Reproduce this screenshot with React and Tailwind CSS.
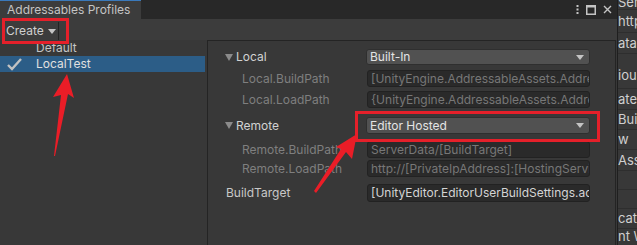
import { useState } from "react";

const rows = [
  { kind: "dropdown", label: "Local", value: "Built-In", mt: "mt-[8px]", h: "h-[16px]" },
  { kind: "field", label: "Local.BuildPath", value: "[UnityEngine.AddressableAssets.Addressables.BuildPath]/[BuildTarget]", mt: "mt-[5px]", h: "h-[17px]" },
  { kind: "field", label: "Local.LoadPath", value: "{UnityEngine.AddressableAssets.Addressables.RuntimePath}/[BuildTarget]", mt: "mt-[4px]", h: "h-[17px]" },
  { kind: "dropdown", label: "Remote", value: "Editor Hosted", mt: "mt-[9px]", h: "h-[17px]" },
  { kind: "field", label: "Remote.BuildPath", value: "ServerData/[BuildTarget]", mt: "mt-[7px]", h: "h-[17px]" },
  { kind: "field", label: "Remote.LoadPath", value: "http://[PrivateIpAddress]:[HostingServicePort]", mt: "mt-[2px]", h: "h-[17px]" },
  { kind: "edit", label: "BuildTarget", value: "[UnityEditor.EditorUserBuildSettings.activeBuildTarget]", mt: "mt-[7px]", h: "h-[18px]" },
];

const sideRows = [
  { text: "Ser", h: "h-[14px]", align: "items-start -mt-[4px]" },
  { text: "http", h: "h-[23px]", align: "items-center" },
  { text: "atalo", h: "h-[21px]", align: "items-center" },
  { text: "ious", h: "h-[35px]", align: "items-end pb-[6px]" },
  { text: "ate", h: "h-[21px]", align: "items-center" },
  { text: "Bui", h: "h-[20px]", align: "items-center" },
  { text: "w", h: "h-[20px]", align: "items-center" },
  { text: "Ass", h: "h-[21px]", align: "items-center" },
  { text: "", h: "h-[19px]", align: "items-center" },
  { text: "", h: "h-[19px]", align: "items-center" },
  { text: "cate", h: "h-[20px]", align: "items-center" },
  { text: "nt W", h: "h-[20px]", align: "items-start pt-[1px]" },
];

function Caret({ className }) {
  return (
    <svg width="8" height="5" viewBox="0 0 8 5" className={className}>
      <path d="M0 0 H8 L4 5 Z" fill="currentColor" />
    </svg>
  );
}

function Foldout() {
  return (
    <svg width="8" height="7" viewBox="0 0 8 7" className="text-[#8b8b8b] mr-[3px]">
      <path d="M0 0 H8 L4 7 Z" fill="currentColor" />
    </svg>
  );
}

function Row({ row }) {
  const sub = row.kind === "field";
  return (
    <div className={`flex items-center ${row.mt}`}>
      <div className={`w-[158px] flex items-center ${sub ? "pl-[34px] text-[#7f7f7f]" : row.kind === "edit" ? "pl-[18px] text-[#c8c8c8]" : "pl-[17px] text-[#d2d2d2]"}`}>
        {row.kind === "dropdown" && <Foldout />}
        <span className="whitespace-nowrap">{row.label}</span>
      </div>
      {row.kind === "dropdown" ? (
        <div className={`w-[224px] ${row.h} rounded-[3px] bg-[#515151] border border-[#2f2f2f] flex items-center justify-between pl-[3px] pr-[5px] text-[#e4e4e4]`}>
          <span className="whitespace-nowrap">{row.value}</span>
          <Caret className="text-[#c4c4c4]" />
        </div>
      ) : (
        <div className={`ml-[1px] w-[223px] ${row.h} rounded-[3px] bg-[#2a2a2a] border border-[#222222] flex items-center pl-[3px] overflow-hidden ${row.kind === "edit" ? "text-[#d4d4d4]" : "text-[#777777]"}`}>
          <span className="whitespace-nowrap">{row.value}</span>
        </div>
      )}
    </div>
  );
}

export default function App() {
  const [selected] = useState("LocalTest");

  return (
    <div className="relative w-[637px] h-[245px] overflow-hidden flex bg-[#383838] font-['Inter',sans-serif] text-[12px] leading-none">
      <div className="w-[617px] flex flex-col shrink-0">
        <div className="h-[19px] bg-[#282828] flex items-stretch">
          <div className="w-[141px] bg-[#3c3c3c] border-t border-[#3a79bb] flex items-center pl-[7px] text-[#c4c4c4]">
            Addressables Profiles
          </div>
          <div className="flex-1 flex items-center justify-end pr-[5px] gap-[7px] text-[#c4c4c4]">
            <svg width="3" height="9" viewBox="0 0 3 9">
              <rect x="0.5" y="0" width="2" height="2" fill="currentColor" />
              <rect x="0.5" y="3.5" width="2" height="2" fill="currentColor" />
              <rect x="0.5" y="7" width="2" height="2" fill="currentColor" />
            </svg>
            <svg width="10" height="10" viewBox="0 0 10 10">
              <rect x="0.75" y="0.75" width="8.5" height="8.5" fill="none" stroke="currentColor" strokeWidth="1.5" />
              <rect x="0.5" y="0.5" width="9" height="2" fill="currentColor" />
            </svg>
            <svg width="9" height="9" viewBox="0 0 9 9">
              <path d="M1 1 L8 8 M8 1 L1 8" stroke="currentColor" strokeWidth="1.4" />
            </svg>
          </div>
        </div>

        <div className="h-[21px] bg-[#3c3c3c] flex items-stretch">
          <div className="w-[59px] border-r border-[#232323] my-[3px] -mb-0 flex items-center pl-[6px] gap-[4px] text-[#d0d0d0]">
            <span>Create</span>
            <Caret className="text-[#c4c4c4]" />
          </div>
        </div>

        <div className="flex-1 flex">
          <div className="w-[207px] shrink-0 text-[#c4c4c4]">
            {["Default", "LocalTest"].map((name) => (
              <div
                key={name}
                className={`h-[16px] mr-[2px] flex items-center pl-[36px] relative ${name === selected ? "bg-[#2c5d87] text-[#e0e0e0]" : ""}`}
              >
                {name === selected && (
                  <svg width="15" height="13" viewBox="0 0 15 13" className="absolute left-[7px] top-[2px]">
                    <path d="M1 7 L5 11 L14 1" fill="none" stroke="#c2c2c2" strokeWidth="2.4" />
                  </svg>
                )}
                {name}
              </div>
            ))}
          </div>

          <div className="flex-1 border-l border-t border-r border-[#242424] bg-[#383838] mr-[1px]">
            {rows.map((row) => (
              <Row key={row.label} row={row} />
            ))}
          </div>
        </div>
      </div>

      <div className="flex-1 border-l border-[#1f1f1f] flex flex-col text-[#cfcfcf] text-[13px] overflow-hidden">
        {sideRows.map((r, i) => (
          <div key={i} className={`${r.h} shrink-0 border-b border-[#2e2e2e] flex ${r.align} whitespace-nowrap`}>
            {r.text}
          </div>
        ))}
      </div>

      <div className="absolute left-[2px] top-[18px] w-[67px] h-[26px] border-[3px] border-[#e5202a] pointer-events-none" />
      <div className="absolute left-[355px] top-[111px] w-[245px] h-[31px] border-[3px] border-[#e5202a] pointer-events-none" />

      <svg width="637" height="245" viewBox="0 0 637 245" className="absolute left-0 top-0 pointer-events-none">
        <polygon points="67,74 74,98 68,94 55,156 54,156 61,95 53,97" fill="#ea1d27" />
        <polygon points="357,134 352,159 346,152 316,193 314,191 341,149 336,147" fill="#ea1d27" />
      </svg>
    </div>
  );
}
